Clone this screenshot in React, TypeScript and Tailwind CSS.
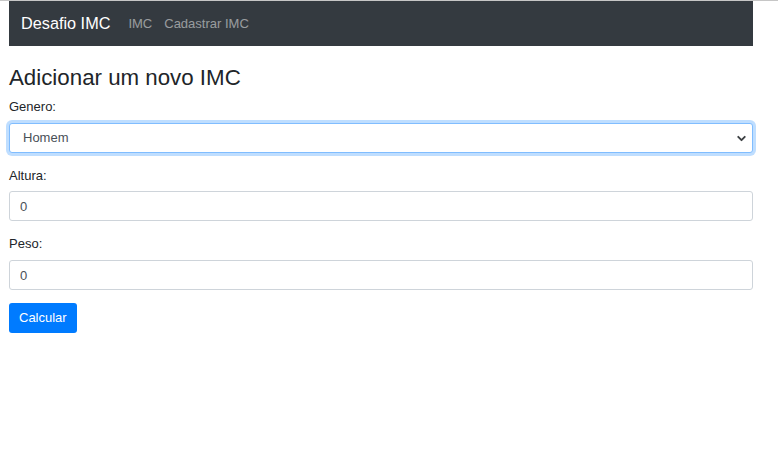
import { ChevronDown } from "lucide-react";

const font = "font-['Liberation_Sans',Arial,sans-serif]";

interface Field {
  label: string;
  value: string;
  gap: string;
}

const fields: Field[] = [
  { label: "Altura:", value: "0", gap: "mb-[5px]" },
  { label: "Peso:", value: "0", gap: "mb-[6px]" },
];

export default function App() {
  return (
    <div className={clsx(font, "min-h-[463px] bg-white border-t border-[#c6c6c6] text-[#212529] text-[13px]")}>
      <div className="w-[744px] ml-[9px]">
        <nav className="h-[45px] bg-[#343a40] flex items-center px-[12px]">
          <span className="text-[16.25px] text-white mr-[18px] leading-none">Desafio IMC</span>
          <div className="flex gap-[12px] text-[13px] text-white/50">
            <span>IMC</span>
            <span>Cadastrar IMC</span>
          </div>
        </nav>

        <h3 className="mt-[18px] mb-[6px] text-[22.3px] leading-[27px] font-normal">Adicionar um novo IMC</h3>

        <div className="mb-[13px]">
          <label className="block mb-[6px] leading-[20px]">Genero:</label>
          <div className="relative">
            <select
              defaultValue="Homem"
              className="appearance-none w-full h-[30px] rounded-[3px] border border-[#80bdff] bg-white pl-[13px] pr-8 text-[13px] text-[#495057] shadow-[0_0_0_3px_rgba(0,123,255,0.25)] outline-none"
            >
              <option>Homem</option>
              <option>Mulher</option>
            </select>
            <ChevronDown
              className="absolute right-[5px] top-[9px] w-[13px] h-[13px] text-[#3c4043] pointer-events-none"
              strokeWidth={3.5}
            />
          </div>
        </div>

        {fields.map((f) => (
          <div key={f.label} className="mb-[13px]">
            <label className={clsx("block leading-[20px]", f.gap)}>{f.label}</label>
            <input
              defaultValue={f.value}
              className="block w-full h-[30px] rounded-[3px] border border-[#ced4da] px-[10px] text-[13px] text-[#495057] outline-none"
            />
          </div>
        ))}

        <button className="block h-[30px] px-[10px] rounded-[3px] bg-[#007bff] text-white text-[13px] leading-[1.5]">
          Calcular
        </button>
      </div>
    </div>
  );
}

function clsx(...c: string[]) {
  return c.join(" ");
}
